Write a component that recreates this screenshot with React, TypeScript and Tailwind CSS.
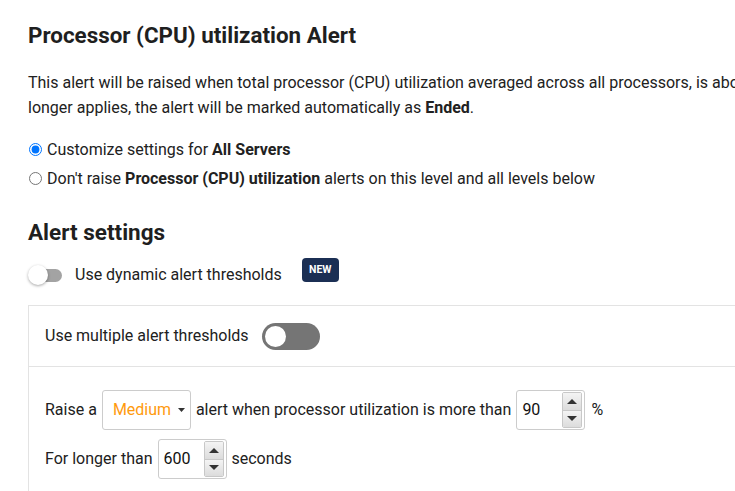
const Spinner = () => (
  <div className="flex flex-col w-[20px] h-[36px] rounded-[2px] border border-[#c8c8c8] overflow-hidden">
    <div className="flex-1 flex items-center justify-center bg-gradient-to-b from-[#f4f4f4] to-[#dcdcdc] border-b border-[#c8c8c8]">
      <svg width="10" height="5" viewBox="0 0 10 5">
        <path d="M0 5 L5 0 L10 5 Z" fill="#333" />
      </svg>
    </div>
    <div className="flex-1 flex items-center justify-center bg-gradient-to-b from-[#f4f4f4] to-[#dcdcdc]">
      <svg width="10" height="5" viewBox="0 0 10 5">
        <path d="M0 0 L5 5 L10 0 Z" fill="#333" />
      </svg>
    </div>
  </div>
);

const NumberBox = ({ value }: { value: string }) => (
  <div className="flex items-center justify-between w-[69px] h-[40px] border border-[#cccccc] rounded-[3px] bg-white pl-[5px] pr-[2px] mx-[5px]">
    <span className="text-[16px] text-[#111]">{value}</span>
    <Spinner />
  </div>
);

const App = () => {
  return (
    <div
      className="w-[735px] h-[491px] overflow-hidden bg-white text-[#212121] pl-[28px]"
      style={{ fontFamily: "Roboto, 'Liberation Sans', sans-serif" }}
    >
      <h1 className="pt-[21px] text-[22.4px] leading-[28px] font-bold text-[#1f1f1f] whitespace-nowrap">
        Processor (CPU) utilization Alert
      </h1>

      <div className="mt-[21px] text-[16px] leading-[25px] whitespace-nowrap">
        <p>
          This alert will be raised when total processor (CPU) utilization averaged across all processors, is above
        </p>
        <p>
          longer applies, the alert will be marked automatically as <b>Ended</b>.
        </p>
      </div>

      <div className="mt-[15px] text-[16px] whitespace-nowrap">
        <label className="flex items-center h-[29px] gap-[5px]">
          <input type="radio" name="scope" defaultChecked className="m-0 ml-[1px] w-[13px] h-[13px]" />
          <span>
            Customize settings for <b>All Servers</b>
          </span>
        </label>
        <label className="flex items-center h-[29px] gap-[5px]">
          <input type="radio" name="scope" className="m-0 ml-[1px] w-[13px] h-[13px]" />
          <span>
            Don't raise <b>Processor (CPU) utilization</b> alerts on this level and all levels below
          </span>
        </label>
      </div>

      <h2 className="mt-[24px] text-[22.5px] leading-[30px] font-bold text-[#1f1f1f]">Alert settings</h2>

      <div className="mt-[14px] flex items-center h-[28px] text-[16px] whitespace-nowrap">
        <div className="relative w-[34px] h-[20px] flex items-center">
          <div className="ml-[8px] w-[26px] h-[13px] rounded-full bg-[#a3a3a3]" />
          <div className="absolute left-0 top-0 w-[20px] h-[20px] rounded-full bg-white shadow-[0_1px_3px_rgba(0,0,0,0.35)]" />
        </div>
        <span className="ml-[13px]">Use dynamic alert thresholds</span>
        <span className="ml-[20px] self-start -mt-[3px] inline-flex items-center justify-center w-[37px] h-[24px] rounded-[4px] bg-[#1b2f54] text-white text-[10.5px] font-bold">
          NEW
        </span>
      </div>

      <div className="mt-[16px] w-[1000px] border border-[#e3e3e3] text-[16px] whitespace-nowrap">
        <div className="flex items-center h-[61px] pl-[16px] border-b border-[#e3e3e3]">
          <span>Use multiple alert thresholds</span>
          <div className="ml-[13px] w-[58px] h-[27px] rounded-full bg-[#757575] flex items-center pl-[3px]">
            <div className="w-[21px] h-[21px] rounded-full bg-white" />
          </div>
        </div>

        <div className="pl-[16px] pt-[23px] pb-[20px] flex flex-col gap-[9px]">
          <div className="flex items-center h-[40px]">
            <span>Raise a</span>
            <div className="mx-[5px] flex items-center w-[89px] h-[40px] border border-[#cccccc] rounded-[3px] pl-[10px]">
              <span className="text-[#ff9a0e]">Medium</span>
              <svg className="ml-[7px]" width="7" height="4" viewBox="0 0 7 4">
                <path d="M0 0 L7 0 L3.5 4 Z" fill="#333" />
              </svg>
            </div>
            <span>alert when processor utilization is more than</span>
            <NumberBox value="90" />
            <span className="ml-[1px]">%</span>
          </div>
          <div className="flex items-center h-[40px]">
            <span>For longer than</span>
            <NumberBox value="600" />
            <span>seconds</span>
          </div>
        </div>
      </div>
    </div>
  );
};

export default App;
